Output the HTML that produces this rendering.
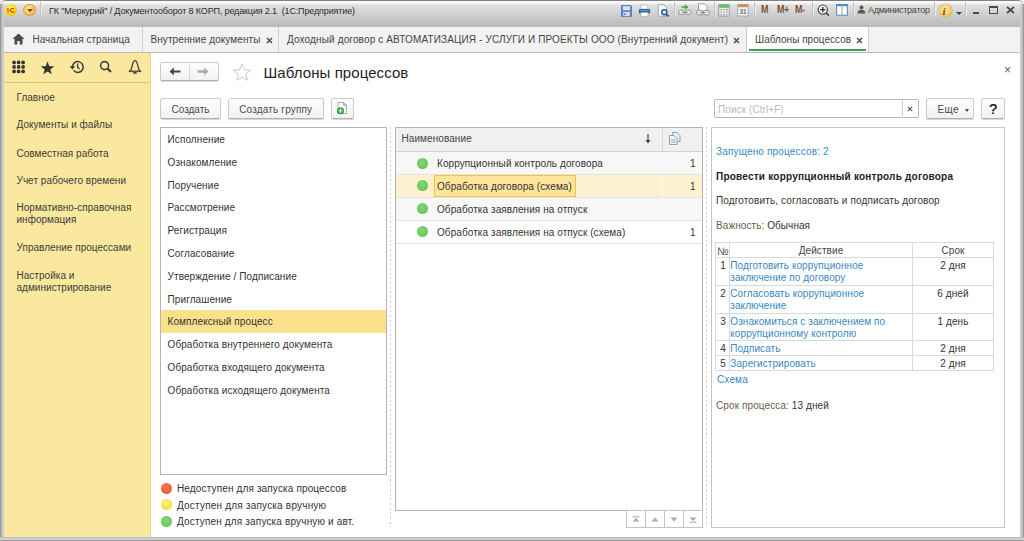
<!DOCTYPE html>
<html><head><meta charset="utf-8">
<style>
*{box-sizing:border-box;margin:0;padding:0}
html,body{width:1024px;height:541px;overflow:hidden;background:#fff;font-family:"Liberation Sans",sans-serif;font-size:10px;color:#333}
.a{position:absolute}
.t{position:absolute;white-space:nowrap;line-height:12px;font-size:10px;letter-spacing:0.08px}
#titlebar{left:0;top:0;width:1024px;height:27px;background:linear-gradient(#fbfbfb 0px,#f6f6f6 2px,#e0e0e0 4px,#d6d6d6 10px,#cacaca 16px,#c0c0c0 22px,#bababa 26px);border-top:1px solid #7f7f7f;border-radius:6px 6px 0 0}
#lframe{left:0;top:4px;width:4px;height:537px;background:linear-gradient(90deg,#8c8c8c 0px,#adadad 1px,#c8c8c8 2.5px,#d0d0d0 4px)}
#rframe{left:1020px;top:4px;width:4px;height:537px;background:linear-gradient(90deg,#d0d0d0 0px,#c8c8c8 1.5px,#adadad 3px,#8c8c8c 4px)}
#bframe{left:0;top:537px;width:1024px;height:4px;background:linear-gradient(#bababa 0px,#c4c4c4 1.2px,#d8d8d8 2px,#d2d2d2 2.8px,#8e8e8e 3.6px)}
#tabbar{left:4px;top:27px;width:1016px;height:26px;background:#f2f2f2;border-bottom:1px solid #b9b9b9}
.tab{position:absolute;top:0;height:25px;border-right:1px solid #cfcfcf}
.tabx{position:absolute;font-size:11px;font-weight:bold;color:#555;line-height:12px}
#side{left:4px;top:53px;width:147px;height:484px;background:#f9e89d;border-right:1px solid #e6d58e}
.si{position:absolute;left:16.5px;white-space:nowrap;font-size:10px;line-height:12.3px;color:#3c3c3c;letter-spacing:0.03px}
.btn{position:absolute;height:21px;padding-top:2px;border:1px solid #cbcbcb;border-bottom-color:#b0b0b0;border-radius:2.5px;background:linear-gradient(#ffffff,#f1f1f1);box-shadow:0 1px 0 #d8d8d8;color:#4a4a4a;text-align:center;line-height:18px;font-size:10px}
.li{position:absolute;left:7px;white-space:nowrap;line-height:12px;color:#333;letter-spacing:0.1px}
.dot{position:absolute;width:11px;height:11px;border-radius:50%}
.g{background:radial-gradient(circle at 45% 40%,#86d876,#66c55a 70%,#58b04e)}
.row{position:absolute;left:0;width:306px;height:23px;border-bottom:1px solid #e4e4e4}
.rt{position:absolute;left:41px;white-space:nowrap;line-height:12px;color:#333}
.rn{position:absolute;right:7px;line-height:12px;color:#333}
.lnk{color:#3788bf}
table.act{position:absolute;left:715px;top:242px;border-collapse:collapse;width:278px;table-layout:fixed}
table.act td{border:1px solid #d9d9d9;font-size:10px;line-height:12.3px;vertical-align:top;padding:1.5px 1px 0 1px;letter-spacing:0.08px}
table.act tr td:first-child{padding-right:3px}
table.act td.lnk{padding-left:0.3px}
</style></head>
<body>
<!-- window frame -->
<div id="titlebar" class="a"></div>
<div id="lframe" class="a"></div>
<div id="rframe" class="a"></div>
<div id="bframe" class="a"></div>

<!-- title bar content -->
<svg class="a" style="left:5px;top:4px" width="12" height="12" viewBox="0 0 12 12"><defs><radialGradient id="yg" cx="45%" cy="40%" r="60%"><stop offset="0" stop-color="#fff59a"/><stop offset="0.6" stop-color="#f8e21c"/><stop offset="1" stop-color="#e6c400"/></radialGradient></defs><circle cx="6" cy="6" r="5.9" fill="url(#yg)"/><path d="M2 4.2H3.6V8.6H2.6V5.3H2Z" fill="#e3140f"/><path d="M9.2 4.8C8.9 4.2 8.3 3.9 7.4 3.9C5.9 3.9 4.9 4.9 4.9 6.3C4.9 7.6 5.7 8.5 6.9 8.5H9.6V7.4H7.1C6.4 7.4 6 6.9 6 6.2C6 5.5 6.6 5 7.3 5C7.8 5 8.1 5.2 8.3 5.5Z" fill="#e3140f"/></svg>
<div class="a" style="left:23px;top:4.2px;width:12.5px;height:12.2px;border-radius:50%;background:radial-gradient(circle at 40% 35%,#ffe39a,#f7b94c 70%,#d99a30);border:1px solid #d9a040"></div>
<div class="a" style="left:26.5px;top:9px;width:0;height:0;border-left:3px solid transparent;border-right:3px solid transparent;border-top:3px solid #6a4a20"></div>
<div class="a" style="left:40px;top:2px;width:2px;height:13px;background:#c2c2c2;border-right:1px solid #ececec"></div>
<div class="t" style="left:49px;top:5px;font-size:9px;color:#2a2a2a;letter-spacing:-0.14px">ГК "Меркурий" / Документооборот 8 КОРП, редакция 2.1 &nbsp;(1С:Предприятие)</div>

<!-- title bar icons -->
<svg class="a" style="left:621px;top:4.5px" width="11" height="12" viewBox="0 0 11 12"><path d="M0.5 0.5H9.8L10.5 1.2V11.5H0.5Z" fill="#5b8fce" stroke="#4677b5" stroke-width="0.8"/><rect x="2" y="1.3" width="7" height="3.8" fill="#e9eef5"/><path d="M2.5 2.6H8.5M2.5 3.9H8.5" stroke="#b8c8dc" stroke-width="0.5"/><rect x="2.3" y="7" width="6.4" height="4.2" fill="#d9dde2"/><rect x="3" y="8.3" width="1.5" height="1.8" fill="#4677b5"/></svg>
<svg class="a" style="left:638px;top:4px" width="13" height="13" viewBox="0 0 13 13"><path d="M3 1H8L9.8 2.8V5H3Z" fill="#fff" stroke="#9aa7b5" stroke-width="0.6"/><rect x="0.8" y="5" width="11.4" height="4.6" rx="1" fill="#2f6aa3"/><rect x="1.8" y="6" width="9.4" height="1" fill="#5e93c6"/><rect x="3" y="8.4" width="7" height="3.8" fill="#fff" stroke="#9aa7b5" stroke-width="0.6"/></svg>
<svg class="a" style="left:657px;top:4px" width="13" height="13" viewBox="0 0 13 13"><path d="M1.3 0.8H6.8L9.5 3.5V12.2H1.3Z" fill="#fbfbfb" stroke="#8e969e" stroke-width="0.8"/><circle cx="7.3" cy="8.3" r="2.5" fill="#fff" stroke="#1f5a8f" stroke-width="1.5"/><path d="M9 10L11.5 12.4" stroke="#1f5a8f" stroke-width="1.8"/></svg>
<div class="a" style="left:674px;top:2px;width:2px;height:15px;background:#c2c2c2;border-right:1px solid #ececec"></div>
<svg class="a" style="left:678px;top:3px" width="14" height="13" viewBox="0 0 14 13"><path d="M3.5 3.2H7V1.2L10.4 4L7 6.8V4.8H3.5Z" fill="#2fb13a"/><rect x="0.8" y="7.2" width="5.6" height="4.4" rx="1.4" fill="#e8e8e8" stroke="#8a8f95" stroke-width="0.9"/><rect x="7.4" y="7.2" width="5.6" height="4.4" rx="1.4" fill="#e8e8e8" stroke="#8a8f95" stroke-width="0.9"/><path d="M4 9.4H9.8" stroke="#8a8f95" stroke-width="1"/></svg>
<svg class="a" style="left:696px;top:3px" width="14" height="13" viewBox="0 0 14 13"><path d="M2.5 0.8H8.5L11 3.3V8H2.5Z" fill="#fff" stroke="#8a8f95" stroke-width="0.8"/><rect x="0.8" y="7.4" width="5.8" height="4.6" rx="1.5" fill="#e8e8e8" stroke="#8a8f95" stroke-width="0.9"/><rect x="7.4" y="7.4" width="5.8" height="4.6" rx="1.5" fill="#e8e8e8" stroke="#8a8f95" stroke-width="0.9"/><path d="M4 9.7H10" stroke="#8a8f95" stroke-width="1"/></svg>
<div class="a" style="left:714px;top:2px;width:2px;height:15px;background:#c2c2c2;border-right:1px solid #ececec"></div>
<svg class="a" style="left:718px;top:4px" width="12" height="13" viewBox="0 0 12 13"><rect x="0.8" y="0.6" width="10.4" height="11.4" fill="#eef0f2" stroke="#8e98a2" stroke-width="0.9"/><rect x="1.2" y="1" width="9.6" height="2.8" fill="#5ec456"/><g fill="#9aa3ab"><rect x="2.4" y="5" width="1.6" height="1.2"/><rect x="5.2" y="5" width="1.6" height="1.2"/><rect x="2.4" y="7.3" width="1.6" height="1.2"/><rect x="5.2" y="7.3" width="1.6" height="1.2"/><rect x="8" y="7.3" width="1.6" height="1.2"/><rect x="2.4" y="9.6" width="1.6" height="1.2"/><rect x="5.2" y="9.6" width="1.6" height="1.2"/><rect x="8" y="9.6" width="1.6" height="1.2"/></g><rect x="8" y="5" width="1.6" height="1.2" fill="#e04848"/></svg>
<svg class="a" style="left:737px;top:3px" width="12" height="14" viewBox="0 0 12 14"><rect x="0.8" y="1.4" width="10.4" height="11.6" fill="#f6f7f8" stroke="#9aa2aa" stroke-width="0.9"/><rect x="1.2" y="1.6" width="9.6" height="2.6" fill="#d98a4a"/><text x="6" y="11.3" font-family="Liberation Sans" font-size="6.5" font-weight="bold" text-anchor="middle" fill="#6a6e72">31</text></svg>
<div class="a" style="left:754px;top:2px;width:2px;height:15px;background:#c2c2c2;border-right:1px solid #ececec"></div>
<div class="a" style="left:760.8px;top:5.2px;font-size:10px;font-weight:bold;color:#7e4f2a;line-height:10px;transform:scaleX(0.9);transform-origin:0 0">M</div>
<div class="a" style="left:776.8px;top:5.2px;font-size:10px;font-weight:bold;color:#7e4f2a;line-height:10px;letter-spacing:-0.6px;transform:scaleX(0.9);transform-origin:0 0">M+</div>
<div class="a" style="left:794.8px;top:5.2px;font-size:10px;font-weight:bold;color:#7e4f2a;line-height:10px;letter-spacing:-0.6px;transform:scaleX(0.9);transform-origin:0 0">M-</div>
<div class="a" style="left:812px;top:2px;width:2px;height:15px;background:#c2c2c2;border-right:1px solid #ececec"></div>
<svg class="a" style="left:817px;top:4px" width="13" height="13" viewBox="0 0 13 13"><circle cx="5.8" cy="5.6" r="4.6" fill="#f4f4f4" stroke="#3c3c3c" stroke-width="1.1"/><path d="M5.8 3V8.2M3.2 5.6H8.4" stroke="#2a2a2a" stroke-width="1.3"/><path d="M9.2 9L11.8 11.6" stroke="#3c3c3c" stroke-width="1.6"/></svg>
<svg class="a" style="left:836px;top:4px" width="12" height="12" viewBox="0 0 12 12"><rect x="0.6" y="0.6" width="10.8" height="10.6" fill="#fff" stroke="#5d8fc4" stroke-width="1.1"/><rect x="0.6" y="0.6" width="10.8" height="1.6" fill="#4a86d0"/><path d="M6 2.2V11" stroke="#9a9a9a" stroke-width="1"/></svg>
<div class="a" style="left:853px;top:2px;width:2px;height:15px;background:#c2c2c2;border-right:1px solid #ececec"></div>
<svg class="a" style="left:857px;top:5px" width="9" height="9" viewBox="0 0 9 9"><circle cx="4.5" cy="2.4" r="2" fill="#5a5a5a"/><path d="M0.6 8.6C0.6 5.6 2.2 4.8 4.5 4.8S8.4 5.6 8.4 8.6Z" fill="#5a5a5a"/></svg>
<div class="a" style="left:868px;top:5px;font-size:9px;line-height:11px;color:#4a3e2e;letter-spacing:-0.25px;white-space:nowrap">Администратор</div>
<div class="a" style="left:934px;top:2px;width:2px;height:15px;background:#c2c2c2;border-right:1px solid #ececec"></div>
<div class="a" style="left:938.8px;top:4px;width:13px;height:13px;border-radius:50%;background:radial-gradient(circle at 45% 40%,#ffe9a8,#f8c85e 60%,#e6a63a);box-shadow:0 0 0 0.5px #e0a84a"></div>
<div class="a" style="left:942.5px;top:4.5px;font-family:'Liberation Serif',serif;font-style:italic;font-weight:bold;font-size:11px;line-height:12px;color:#5a5040">i</div>
<div class="a" style="left:956px;top:11.5px;width:0;height:0;border-left:3px solid transparent;border-right:3px solid transparent;border-top:3px solid #3e3e3e"></div>
<div class="a" style="left:965px;top:2px;width:2px;height:15px;background:#c2c2c2;border-right:1px solid #ececec"></div>
<div class="a" style="left:973px;top:12px;width:6px;height:1.6px;background:#4a4a4a"></div>
<div class="a" style="left:989px;top:6px;width:9px;height:8px;border:1.2px solid #4a4a4a;border-top-width:2.2px"></div>
<svg class="a" style="left:1006px;top:5.5px" width="9" height="8" viewBox="0 0 9 8"><path d="M1 0.8L8 7.2M8 0.8L1 7.2" stroke="#444" stroke-width="1.8"/></svg>

<!-- tab bar -->
<div id="tabbar" class="a">
  <div class="tab" style="left:0;width:139px"></div>
  <div class="tab" style="left:139px;width:136px"></div>
  <div class="tab" style="left:275px;width:468px"></div>
  <div class="tab" style="left:743px;width:122px;background:#fff;border-left:0"></div>
</div>
<div class="t" style="left:32.5px;top:34px;color:#444;letter-spacing:0.03px">Начальная страница</div>
<div class="t" style="left:150.5px;top:34px;color:#444">Внутренние документы</div>
<div class="t" style="left:287px;top:34px;color:#444;letter-spacing:0.134px">Доходный договор с АВТОМАТИЗАЦИЯ - УСЛУГИ И ПРОЕКТЫ ООО (Внутренний документ)</div>
<div class="t" style="left:755px;top:34px;color:#444;letter-spacing:0.02px">Шаблоны процессов</div>
<div class="a" style="left:749px;top:49px;width:117px;height:2px;background:#3aa34b"></div>
<!-- home icon -->
<svg class="a" style="left:12px;top:33px" width="13" height="12" viewBox="0 0 13 12"><path d="M6.5 0.5 L12.5 6 L10.5 6 L10.5 11.5 L7.8 11.5 L7.8 8 L5.2 8 L5.2 11.5 L2.5 11.5 L2.5 6 L0.5 6 Z" fill="#4a4a4a"/></svg>
<!-- tab close icons -->
<svg class="a" style="left:266px;top:36.5px" width="7" height="7" viewBox="0 0 7 7"><path d="M1 1L6 6M6 1L1 6" stroke="#505050" stroke-width="1.5"/></svg>
<svg class="a" style="left:733px;top:36.5px" width="7" height="7" viewBox="0 0 7 7"><path d="M1 1L6 6M6 1L1 6" stroke="#505050" stroke-width="1.5"/></svg>
<svg class="a" style="left:855.5px;top:36.5px" width="7" height="7" viewBox="0 0 7 7"><path d="M1 1L6 6M6 1L1 6" stroke="#505050" stroke-width="1.5"/></svg>

<!-- sidebar -->
<div id="side" class="a">
  <div class="a" style="left:0;top:29px;width:146px;height:1px;background:#d8c47a"></div>
</div>
<!-- sidebar icons -->
<svg class="a" style="left:12px;top:60px" width="15" height="15" viewBox="0 0 15 15" fill="#333">
<circle cx="2.1" cy="2.4" r="1.85"/><circle cx="6.6" cy="2.4" r="1.85"/><circle cx="11.1" cy="2.4" r="1.85"/>
<circle cx="2.1" cy="6.9" r="1.85"/><circle cx="6.6" cy="6.9" r="1.85"/><circle cx="11.1" cy="6.9" r="1.85"/>
<circle cx="2.1" cy="11.4" r="1.85"/><circle cx="6.6" cy="11.4" r="1.85"/><circle cx="11.1" cy="11.4" r="1.85"/></svg>
<svg class="a" style="left:40px;top:61px" width="15" height="14" viewBox="0 0 15 14"><path d="M7.5 0.5L9.3 5.2L14.3 5.3L10.3 8.4L11.8 13.3L7.5 10.4L3.2 13.3L4.7 8.4L0.7 5.3L5.7 5.2Z" fill="#333"/></svg>
<svg class="a" style="left:69px;top:60px" width="16" height="14" viewBox="0 0 16 14"><path d="M3.4 7A5.4 5.4 0 1 1 4.6 10.4" fill="none" stroke="#3a3a3a" stroke-width="1.5"/><path d="M0.6 6.2H6.2L3.4 9.4Z" fill="#3a3a3a"/><path d="M8.6 3.6V7.2L10.6 9" fill="none" stroke="#3a3a3a" stroke-width="1.3"/></svg>
<svg class="a" style="left:99px;top:60px" width="14" height="14" viewBox="0 0 14 14"><circle cx="5.6" cy="5.6" r="4" fill="none" stroke="#444" stroke-width="1.6"/><path d="M8.6 8.6L12 12" stroke="#444" stroke-width="2.4" stroke-linecap="butt"/></svg>
<svg class="a" style="left:128px;top:59px" width="14" height="16" viewBox="0 0 14 16"><path d="M7 1.6C5.6 1.6 4.8 4 4.2 6.5L3 10.8L1.2 12.4H12.8L11 10.8L9.8 6.5C9.2 4 8.4 1.6 7 1.6Z" fill="none" stroke="#444" stroke-width="1.3" stroke-linejoin="round"/><path d="M1 12.4H13" stroke="#555" stroke-width="1.4"/><rect x="5.3" y="13" width="3.4" height="1.8" fill="#444"/></svg>
<div class="si" style="top:92px">Главное</div>
<div class="si" style="top:119px">Документы и файлы</div>
<div class="si" style="top:147.5px">Совместная работа</div>
<div class="si" style="top:175px">Учет рабочего времени</div>
<div class="si" style="top:202px">Нормативно-справочная<br>информация</div>
<div class="si" style="top:242px">Управление процессами</div>
<div class="si" style="top:269.7px">Настройка и<br>администрирование</div>

<!-- content header -->
<div class="btn" style="left:160px;top:62.3px;width:59px;height:19px"></div>
<div class="a" style="left:189px;top:63px;width:1px;height:17px;background:#d8d8d8"></div>
<svg class="a" style="left:169px;top:67px" width="12" height="9" viewBox="0 0 12 9"><path d="M0.5 4.5L4.8 0.5V3.4H11.5V5.6H4.8V8.5Z" fill="#444"/></svg>
<svg class="a" style="left:197px;top:67px" width="12" height="9" viewBox="0 0 12 9"><path d="M11.5 4.5L7.2 0.5V3.2H0.5V5.8H7.2V8.5Z" fill="#a9a9a9"/></svg>
<svg class="a" style="left:232px;top:63px" width="20" height="18" viewBox="0 0 20 18"><path d="M10 1L12.4 6.8L18.6 7.2L13.8 11.2L15.4 17.2L10 13.9L4.6 17.2L6.2 11.2L1.4 7.2L7.6 6.8Z" fill="none" stroke="#c9c9c9" stroke-width="1"/></svg>
<div class="t" style="left:263.5px;top:64px;font-size:15px;line-height:17px;color:#1e1e1e">Шаблоны процессов</div>
<div class="a" style="left:1004px;top:65px;font-size:12px;color:#555;line-height:10px">×</div>

<div class="btn" style="left:160px;top:97.5px;width:61px">Создать</div>
<div class="btn" style="left:228px;top:97.5px;width:95.5px;letter-spacing:0.17px">Создать группу</div>
<div class="btn" style="left:330.5px;top:97.5px;width:23.5px;height:21px"></div>
<svg class="a" style="left:336px;top:102px" width="12" height="13" viewBox="0 0 12 13"><path d="M2 0.5H7.5L10.5 3.5V11.5H2Z" fill="#fff" stroke="#9aa3ad" stroke-width="0.9"/><path d="M7.5 0.5V3.5H10.5Z" fill="#c9d6e6" stroke="#7d94b0" stroke-width="0.6"/><circle cx="4.5" cy="8.75" r="3.5" fill="#2a9d3a"/><path d="M4.5 6.6V10.9M2.35 8.75H6.65" stroke="#fff" stroke-width="1.2"/></svg>

<!-- search -->
<div class="a" style="left:714px;top:98.8px;width:205px;height:19.6px;border:1px solid #b9b9b9;border-radius:2px;background:#fff"></div>
<div class="a" style="left:902px;top:100px;width:1px;height:18px;background:#d0d0d0"></div>
<div class="t" style="left:718px;top:104px;color:#bcbcbc">Поиск (Ctrl+F)</div>
<svg class="a" style="left:907px;top:106px" width="6" height="6" viewBox="0 0 6 6"><path d="M0.8 0.8L5.2 5.2M5.2 0.8L0.8 5.2" stroke="#555" stroke-width="1.1"/></svg>
<div class="btn" style="left:926px;top:98.3px;width:48px;height:20.5px;padding-top:1.5px;text-align:left;padding-left:10.5px;letter-spacing:0.3px">Еще</div>
<div class="a" style="left:965px;top:108.5px;width:0;height:0;border-left:2.5px solid transparent;border-right:2.5px solid transparent;border-top:3px solid #444"></div>
<div class="btn" style="left:981px;top:98.3px;width:24px;height:20.5px;padding-top:0.5px;font-size:14px;font-weight:normal;color:#222;text-shadow:0.5px 0 0 #333">?</div>

<!-- left list -->
<div class="a" style="left:160px;top:127px;width:227px;height:348px;border:1px solid #b4b4b4;background:#fff">
  <div class="a" style="left:0;top:182px;width:225px;height:22.5px;background:#fce18d"></div>
</div>
<div class="li" style="left:167.5px;top:134.0px">Исполнение</div>
<div class="li" style="left:167.5px;top:156.8px">Ознакомление</div>
<div class="li" style="left:167.5px;top:179.6px">Поручение</div>
<div class="li" style="left:167.5px;top:202.4px">Рассмотрение</div>
<div class="li" style="left:167.5px;top:225.2px">Регистрация</div>
<div class="li" style="left:167.5px;top:248.0px">Согласование</div>
<div class="li" style="left:167.5px;top:270.8px">Утверждение / Подписание</div>
<div class="li" style="left:167.5px;top:293.6px">Приглашение</div>
<div class="li" style="left:167.5px;top:316.4px">Комплексный процесс</div>
<div class="li" style="left:167.5px;top:339.2px">Обработка внутреннего документа</div>
<div class="li" style="left:167.5px;top:362.0px">Обработка входящего документа</div>
<div class="li" style="left:167.5px;top:384.8px">Обработка исходящего документа</div>

<!-- dotted separators -->
<div class="a" style="left:390px;top:127px;width:1px;height:400px;background:repeating-linear-gradient(#d2d2d2 0 2px,transparent 2px 4.7px)"></div>
<div class="a" style="left:706px;top:127px;width:1px;height:400px;background:repeating-linear-gradient(#d2d2d2 0 2px,transparent 2px 4.7px)"></div>

<!-- middle table -->
<div class="a" style="left:395px;top:127px;width:308px;height:384px;border:1px solid #b4b4b4;background:#fff;overflow:hidden">
  <div class="a" style="left:0;top:0;width:306px;height:24px;background:#f0f0f0;border-bottom:1px solid #d2d2d2"></div>
  <div class="a" style="left:266px;top:0;width:1px;height:24px;background:#d8d8d8"></div>
  <div class="row" style="top:24px;background:#f7f7f7"></div>
  <div class="row" style="top:47px;background:#fdf1cf"></div>
  <div class="row" style="top:70px;background:#f7f7f7"></div>
  <div class="row" style="top:93px;background:#fff"></div>
  <div class="a" style="left:266px;top:47px;width:1px;height:23px;background:#fff8e6"></div>
  <div class="a" style="left:38px;top:47px;width:142px;height:22px;background:#fde59c;border:1.6px solid #f4c23c"></div>
</div>
<div class="t" style="left:401.5px;top:133px;color:#444">Наименование</div>
<svg class="a" style="left:645px;top:134px" width="6" height="10" viewBox="0 0 6 10"><path d="M3 0V8" stroke="#444" stroke-width="1.2"/><path d="M0.5 6L3 9.5L5.5 6Z" fill="#444"/></svg>
<svg class="a" style="left:669px;top:132px" width="12" height="13" viewBox="0 0 12 13"><path d="M3.5 0.5H8L11 3.5V9.5H3.5Z" fill="#e8eef5" stroke="#8ea3b8"/><path d="M0.5 3.5H5L8 6.5V12.5H0.5Z" fill="#f2f6fa" stroke="#8ea3b8"/><path d="M2 7.5H6.5M2 9H6.5M2 10.5H6.5" stroke="#9fb3c6" stroke-width="0.8"/></svg>
<div class="dot g" style="left:417px;top:157.5px"></div>
<div class="dot g" style="left:417px;top:180px"></div>
<div class="dot g" style="left:417px;top:203px"></div>
<div class="dot g" style="left:417px;top:226px"></div>
<div class="t" style="left:437px;top:158px">Коррупционный контроль договора</div>
<div class="t" style="left:437px;top:181px">Обработка договора (схема)</div>
<div class="t" style="left:437px;top:204px">Обработка заявления на отпуск</div>
<div class="t" style="left:437px;top:227px">Обработка заявления на отпуск (схема)</div>
<div class="t" style="left:690px;top:158px">1</div>
<div class="t" style="left:690px;top:181px">1</div>
<div class="t" style="left:690px;top:227px">1</div>
<!-- nav buttons -->
<div class="a" style="left:626px;top:510px;width:77px;height:18px;border:1px solid #c4c4c4;background:#fff"></div>
<div class="a" style="left:645px;top:510px;width:1px;height:17px;background:#c4c4c4"></div>
<div class="a" style="left:664px;top:510px;width:1px;height:17px;background:#c4c4c4"></div>
<div class="a" style="left:683px;top:510px;width:1px;height:17px;background:#c4c4c4"></div>
<svg class="a" style="left:632px;top:516px" width="8" height="7" viewBox="0 0 8 7"><path d="M0.5 0.8H7.5" stroke="#a8a8a8" stroke-width="1"/><path d="M4 2L7.5 5.5H0.5Z" fill="#a8a8a8"/></svg>
<svg class="a" style="left:651px;top:516.5px" width="8" height="5" viewBox="0 0 8 5"><path d="M4 0.5L7.5 4.5H0.5Z" fill="#a8a8a8"/></svg>
<svg class="a" style="left:670px;top:517px" width="8" height="5" viewBox="0 0 8 5"><path d="M4 4.5L7.5 0.5H0.5Z" fill="#a8a8a8"/></svg>
<svg class="a" style="left:689px;top:516px" width="8" height="7" viewBox="0 0 8 7"><path d="M0.5 6.2H7.5" stroke="#a8a8a8" stroke-width="1"/><path d="M4 5L7.5 1.5H0.5Z" fill="#a8a8a8"/></svg>

<!-- legend -->
<div class="dot" style="left:161px;top:482.5px;background:radial-gradient(circle at 45% 40%,#ff7a55,#ee5a3a 70%,#d04a30)"></div>
<div class="dot" style="left:161px;top:499px;background:radial-gradient(circle at 45% 40%,#fff27a,#f5dd3a 70%,#dcc030)"></div>
<div class="dot g" style="left:161px;top:515.5px"></div>
<div class="t" style="left:177px;top:483px;letter-spacing:0.14px">Недоступен для запуска процессов</div>
<div class="t" style="left:177px;top:500px;letter-spacing:0.2px">Доступен для запуска вручную</div>
<div class="t" style="left:177px;top:516px;letter-spacing:0.16px">Доступен для запуска вручную и авт.</div>

<!-- right panel -->
<div class="a" style="left:711px;top:127px;width:294px;height:401px;border:1px solid #c4c4c4;background:#fff"></div>
<div class="t lnk" style="left:716px;top:145.5px;letter-spacing:0.16px">Запущено процессов: 2</div>
<div class="t" style="left:716px;top:171px;font-weight:bold;color:#222;letter-spacing:0.22px">Провести коррупционный контроль договора</div>
<div class="t" style="left:716px;top:195px;letter-spacing:0.125px">Подготовить, согласовать и подписать договор</div>
<div class="t" style="left:716px;top:219.5px"><span style="color:#6b5c45">Важность:</span> Обычная</div>
<table class="act"><colgroup><col style="width:14px"><col style="width:183px"><col style="width:81px"></colgroup>
<tr style="height:15px"><td style="color:#5e5040;padding-left:1px;padding-right:0;letter-spacing:-0.6px;font-size:11px">№</td><td style="text-align:center;color:#444">Действие</td><td style="text-align:center;color:#444">Срок</td></tr>
<tr style="height:28px"><td style="text-align:right">1</td><td class="lnk">Подготовить коррупционное<br>заключение по договору</td><td style="text-align:center">2 дня</td></tr>
<tr style="height:28px"><td style="text-align:right">2</td><td class="lnk">Согласовать коррупционное<br>заключение</td><td style="text-align:center">6 дней</td></tr>
<tr style="height:27px"><td style="text-align:right">3</td><td class="lnk">Ознакомиться с заключением по<br>коррупционному контролю</td><td style="text-align:center">1 день</td></tr>
<tr style="height:15px"><td style="text-align:right">4</td><td class="lnk">Подписать</td><td style="text-align:center">2 дня</td></tr>
<tr style="height:15px"><td style="text-align:right">5</td><td class="lnk">Зарегистрировать</td><td style="text-align:center">2 дня</td></tr>
</table>
<div class="t lnk" style="left:717px;top:374px;letter-spacing:0.15px">Схема</div>
<div class="t" style="left:716px;top:400px;letter-spacing:0.1px"><span style="color:#6b5c45">Срок процесса:</span> 13 дней</div>

</body></html>
